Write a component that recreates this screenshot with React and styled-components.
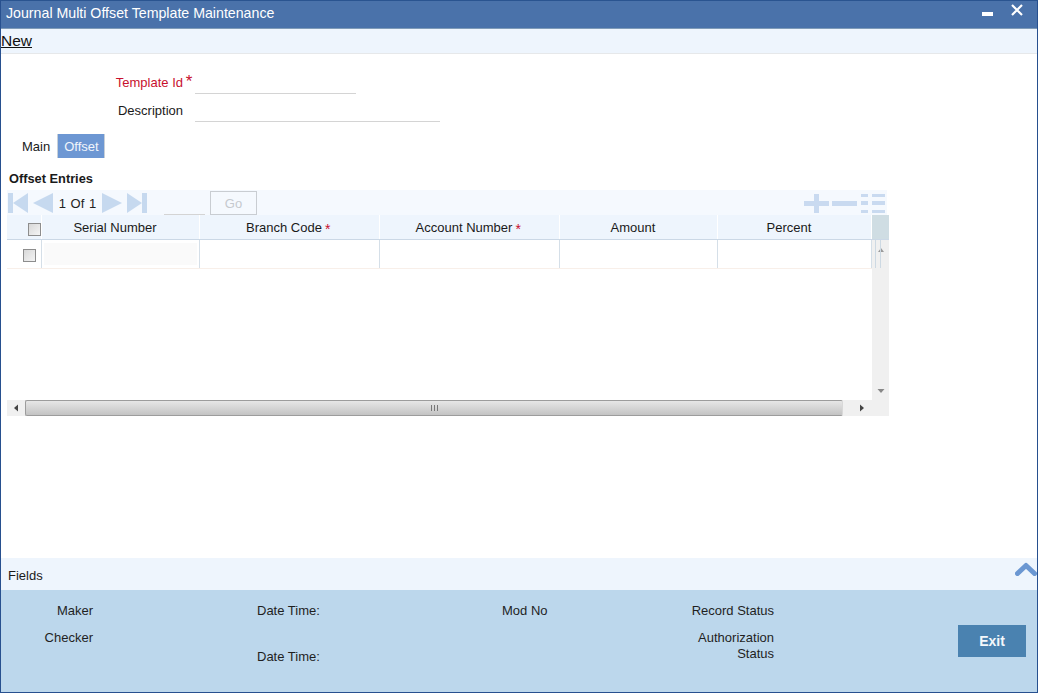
import React from "react";
import styled, { createGlobalStyle } from "styled-components";

const GlobalStyle = createGlobalStyle`
  html, body { margin: 0; padding: 0; background: #fff; }
  body { font-family: "Liberation Sans", Arial, sans-serif; font-size: 13px; color: #1a1a1a; }
`;

const Window = styled.div`
  width: 1038px;
  height: 693px;
  box-sizing: border-box;
  border: 1px solid #27508f;
  border-top-color: #2a5490;
  display: flex;
  flex-direction: column;
  overflow: hidden;
`;

const TitleBar = styled.header`
  height: 27px;
  flex: none;
  background: #4a72aa;
  border-bottom: 1px solid #7f9bb8;
  display: flex;
  justify-content: space-between;
  color: #fff;
  padding-left: 5px;
  line-height: 25px;
  font-size: 14.2px;
`;

const WindowButtons = styled.div`
  display: flex;
  align-items: flex-start;
  gap: 18px;
  padding: 3px 14px 0 0;
`;

const ActionBar = styled.div`
  height: 24px;
  flex: none;
  background: #eef5fd;
  border-bottom: 1px solid #e6e8ea;
  line-height: 24px;
  font-size: 15.5px;
  color: #111;
`;

const NewLink = styled.a`
  text-decoration: underline;
  color: inherit;
`;

const Content = styled.main`
  flex: 1;
  min-height: 0;
  display: flex;
  flex-direction: column;
  padding-top: 14px;
`;

const FormRow = styled.div`
  height: 28px;
  display: flex;
`;

const FieldLabel = styled.label`
  width: 182px;
  flex: none;
  text-align: right;
  line-height: 29px;
  color: ${(p) => (p.$required ? "#c8102e" : "#1a1a1a")};
`;

const Star = styled.span`
  width: 12px;
  flex: none;
  color: #c8102e;
  font-size: 17px;
  line-height: 27px;
  text-align: center;
`;

const FieldInput = styled.div`
  width: ${(p) => p.$w}px;
  height: 25px;
  border-bottom: 1px solid #d4d4d4;
`;

const Tabs = styled.nav`
  display: flex;
  margin: 10px 0 0 15px;
  height: 24px;
`;

const Tab = styled.div`
  padding: ${(p) => (p.$active ? "0 5px 0 6px" : "0 6px")};
  line-height: 25px;
  color: ${(p) => (p.$active ? "#f1f5fb" : "#1a1a1a")};
  background: ${(p) => (p.$active ? "#6d97d3" : "transparent")};
  border-left: ${(p) => (p.$active ? "1px solid #c8d0d8" : "none")};
  border-right: ${(p) => (p.$active ? "1px solid #c8d0d8" : "none")};
  margin-left: ${(p) => (p.$active ? "1px" : "0")};
`;

const SectionTitle = styled.h3`
  margin: 12px 0 0 8px;
  font-size: 12.8px;
  font-weight: bold;
  line-height: 17px;
  height: 20px;
  color: #1a1a1a;
`;

const GridPanel = styled.section`
  width: 882px;
  margin-left: 6px;
`;

const Pager = styled.div`
  height: 25px;
  width: 880px;
  box-sizing: border-box;
  padding: 1px 0 0 1px;
  background: #f5f9fe;
  display: flex;
  align-items: center;
  gap: 5px;
`;

const PageText = styled.span`
  width: 39px;
  flex: none;
  white-space: nowrap;
  word-spacing: 1px;
  color: #222;
  text-align: center;
`;

const JumpInput = styled.div`
  width: 41px;
  height: 23px;
  margin-left: 12px;
  border-bottom: 1px solid #d4d4d4;
  box-sizing: border-box;
  flex: none;
`;

const GoButton = styled.button`
  width: 47px;
  height: 24px;
  border: 1px solid #c9cdd2;
  background: #f5f9fe;
  color: #c5c9ce;
  font: 13px "Liberation Sans", Arial, sans-serif;
  padding: 0;
`;

const RowTools = styled.div`
  margin-left: auto;
  display: flex;
  align-items: center;
  padding-right: 1px;
`;

const HeaderRow = styled.div`
  height: 25px;
  display: flex;
  box-sizing: border-box;
  border-bottom: 1px solid #cbd8e6;
  background: #eef5fd;
`;

const HeadCell = styled.div`
  width: ${(p) => p.$w}px;
  flex: none;
  box-sizing: border-box;
  border-right: 1px solid #fff;
  display: flex;
  align-items: center;
  justify-content: center;
  gap: 3px;
  color: #1a1a1a;
`;

const Req = styled.span`
  width: 8px;
  margin-top: 3px;
  color: #c8102e;
  font-size: 14px;
  visibility: ${(p) => (p.$hidden ? "hidden" : "visible")};
`;

const CornerCell = styled.div`
  flex: 1;
  background: #cfdde3;
`;

const Body = styled.div`
  display: flex;
  height: 160px;
`;

const RowsArea = styled.div`
  width: 865px;
  flex: none;
`;

const DataRow = styled.div`
  display: flex;
  height: 29px;
  box-sizing: border-box;
  border-bottom: 1px solid #f8efe9;
`;

const DataCell = styled.div`
  width: ${(p) => p.$w}px;
  flex: none;
  box-sizing: border-box;
  border-right: 1px solid #d5dfe8;
  display: flex;
  align-items: center;
  justify-content: center;
  padding: ${(p) => (p.$inset ? "3px 2px 3px 2px" : "0")};
`;

const SerialInput = styled.div`
  width: 100%;
  height: 100%;
  background: #fafafa;
`;

const Check = styled.span`
  width: 13px;
  height: 13px;
  display: block;
  box-sizing: border-box;
  border: 1px solid #8d8d8d;
  background: linear-gradient(135deg, #d8d8d8, #f4f4f4);
  margin: ${(p) => p.$top || 0}px 0 0 ${(p) => p.$shift || 0}px;
`;

const VScroll = styled.div`
  width: 17px;
  flex: none;
  background: #f0f0f0;
  display: flex;
  flex-direction: column;
  align-items: center;
  justify-content: space-between;
  position: relative;
  padding: 6px 0 5px;
  box-sizing: border-box;
`;

const VLines = styled.div`
  position: absolute;
  top: 0;
  left: 3px;
  width: 4px;
  height: 28px;
  border-left: 1px solid #cdd9e3;
  border-right: 1px solid #cdd9e3;
`;

const HScroll = styled.div`
  height: 16px;
  width: 882px;
  background: #f0f0f0;
  display: flex;
  align-items: stretch;
`;

const ScrollEnd = styled.div`
  width: ${(p) => p.$w}px;
  flex: none;
  display: flex;
  align-items: center;
  justify-content: center;
`;

const Thumb = styled.div`
  flex: none;
  width: 818px;
  box-sizing: border-box;
  border: 1px solid #9c9c9c;
  border-right-color: #d8d8d8;
  border-radius: 2px;
  background: linear-gradient(#e6e6e6, #c3c3c3);
  display: flex;
  align-items: center;
  justify-content: center;
`;

const Grip = styled.span`
  width: 5px;
  height: 6px;
  border-left: 1px solid #777;
  border-right: 1px solid #777;
  position: relative;
  &::after {
    content: "";
    position: absolute;
    left: 2px;
    top: 0;
    width: 1px;
    height: 6px;
    background: #777;
  }
`;

const FieldsBar = styled.div`
  height: 32px;
  box-sizing: border-box;
  padding: 2px 0 0 7px;
  flex: none;
  background: #eef5fd;
  display: flex;
  justify-content: space-between;
  align-items: center;
  color: #1a1a1a;
`;

const Footer = styled.footer`
  height: 102px;
  flex: none;
  background: #bcd7ec;
  display: grid;
  grid-template-columns: 92px 164px 245px 272px 184px 68px;
  grid-template-rows: 13px 16px 11px 16px 3px 16px;
  color: #1f1f1f;
  line-height: 16px;
`;

const AuditLabel = styled.div`
  grid-column: ${(p) => p.$col};
  grid-row: ${(p) => p.$row};
  text-align: ${(p) => (p.$right ? "right" : "left")};
`;

const WrappedLabel = styled(AuditLabel)`
  justify-self: end;
  width: 90px;
`;

const ExitButton = styled.button`
  grid-column: 6;
  grid-row: 4 / span 3;
  width: 68px;
  height: 32px;
  margin-top: -5px;
  background: #4a82b0;
  color: #f4f8fb;
  border: none;
  font: bold 14px "Liberation Sans", Arial, sans-serif;
  padding: 0;
`;

const Tri = ({ dir }) => (
  <svg width="20" height="20" viewBox="0 0 20 20">
    <polygon points={dir === "left" ? "0,10 20,0 20,20" : "0,0 20,10 0,20"} fill="#c6d9ef" />
  </svg>
);

const EdgeArrow = ({ flip }) => (
  <svg width="20" height="20" viewBox="0 0 20 20" style={flip ? { transform: "scaleX(-1)" } : undefined}>
    <rect x="0" y="0" width="5" height="20" fill="#c6d9ef" />
    <polygon points="5,10 20,0 20,20" fill="#c6d9ef" />
  </svg>
);

const ToolsIcons = () => (
  <svg width="82" height="19" viewBox="0 0 82 19">
    <path d="M0 7h25v5H0zM10 0h5v19h-5z" fill="#c9daf0" />
    <path d="M28 7h25v5H28z" fill="#c9daf0" />
    <path d="M57 0h7v3h-7zM68 0h13v3H68zM57 7h7v4h-7zM68 7h13v4H68zM57 16h7v3h-7zM68 16h13v3H68z" fill="#c9daf0" />
  </svg>
);

const SmallArrow = ({ d, fill = "#444" }) => (
  <svg width="8" height="8" viewBox="0 0 8 8">
    <path d={d} fill={fill} />
  </svg>
);

const columns = [
  { w: 35, name: null },
  { w: 158, name: "Serial Number" },
  { w: 180, name: "Branch Code", req: true },
  { w: 180, name: "Account Number", req: true },
  { w: 158, name: "Amount" },
  { w: 154, name: "Percent" },
];

export default function App() {
  return (
    <>
      <GlobalStyle />
      <Window>
        <TitleBar>
          <span>Journal Multi Offset Template Maintenance</span>
          <WindowButtons>
            <svg width="11" height="13" viewBox="0 0 11 13">
              <rect x="0" y="8" width="11" height="4" fill="#fff" />
            </svg>
            <svg width="12" height="12" viewBox="0 0 12 12">
              <path d="M1 1l10 10M11 1L1 11" stroke="#fff" strokeWidth="2.2" />
            </svg>
          </WindowButtons>
        </TitleBar>
        <ActionBar>
          <NewLink>New</NewLink>
        </ActionBar>
        <Content>
          <FormRow>
            <FieldLabel $required>Template Id</FieldLabel>
            <Star>*</Star>
            <FieldInput $w={161} />
          </FormRow>
          <FormRow>
            <FieldLabel>Description</FieldLabel>
            <Star />
            <FieldInput $w={245} />
          </FormRow>
          <Tabs>
            <Tab>Main</Tab>
            <Tab $active>Offset</Tab>
          </Tabs>
          <SectionTitle>Offset Entries</SectionTitle>
          <GridPanel>
            <Pager>
              <EdgeArrow />
              <Tri dir="left" />
              <PageText>1 Of 1</PageText>
              <Tri dir="right" />
              <EdgeArrow flip />
              <JumpInput />
              <GoButton>Go</GoButton>
              <RowTools>
                <ToolsIcons />
              </RowTools>
            </Pager>
            <HeaderRow>
              {columns.map((c, i) => (
                <HeadCell key={i} $w={c.w}>
                  {c.name ? (
                    <>
                      <span>{c.name}</span>
                      <Req $hidden={!c.req}>*</Req>
                    </>
                  ) : (
                    <Check $shift={20} $top={4} />
                  )}
                </HeadCell>
              ))}
              <CornerCell />
            </HeaderRow>
            <Body>
              <RowsArea>
                <DataRow>
                  <DataCell $w={35}>
                    <Check $shift={10} $top={3} />
                  </DataCell>
                  <DataCell $w={158} $inset>
                    <SerialInput />
                  </DataCell>
                  <DataCell $w={180} />
                  <DataCell $w={180} />
                  <DataCell $w={158} />
                  <DataCell $w={154} />
                </DataRow>
              </RowsArea>
              <VScroll>
                <VLines />
                <SmallArrow d="M4 2l3 4H1z" fill="#9a9a9a" />
                <SmallArrow d="M0.5 2h7L4 6z" fill="#888" />
              </VScroll>
            </Body>
            <HScroll>
              <ScrollEnd $w={18}>
                <SmallArrow d="M6 0.5v7L2 4z" />
              </ScrollEnd>
              <Thumb>
                <Grip />
              </Thumb>
              <ScrollEnd $w={38}>
                <SmallArrow d="M2 0.5v7L6 4z" />
              </ScrollEnd>
            </HScroll>
          </GridPanel>
        </Content>
        <FieldsBar>
          <span>Fields</span>
          <svg width="22" height="14" viewBox="0 0 22 14" style={{ marginTop: -12 }}>
            <path d="M2.5 11.5L11 3.5l8.5 8" fill="none" stroke="#6b97d2" strokeWidth="5" strokeLinecap="round" strokeLinejoin="round" />
          </svg>
        </FieldsBar>
        <Footer>
          <AuditLabel $col={1} $row={2} $right>Maker</AuditLabel>
          <AuditLabel $col={3} $row={2}>Date Time:</AuditLabel>
          <AuditLabel $col={4} $row={2}>Mod No</AuditLabel>
          <AuditLabel $col={4} $row={2} $right>Record Status</AuditLabel>
          <AuditLabel $col={1} $row={4} $right>Checker</AuditLabel>
          <WrappedLabel $col={4} $row="4 / span 3" $right>Authorization Status</WrappedLabel>
          <AuditLabel $col={3} $row={6}>Date Time:</AuditLabel>
          <ExitButton>Exit</ExitButton>
        </Footer>
      </Window>
    </>
  );
}
